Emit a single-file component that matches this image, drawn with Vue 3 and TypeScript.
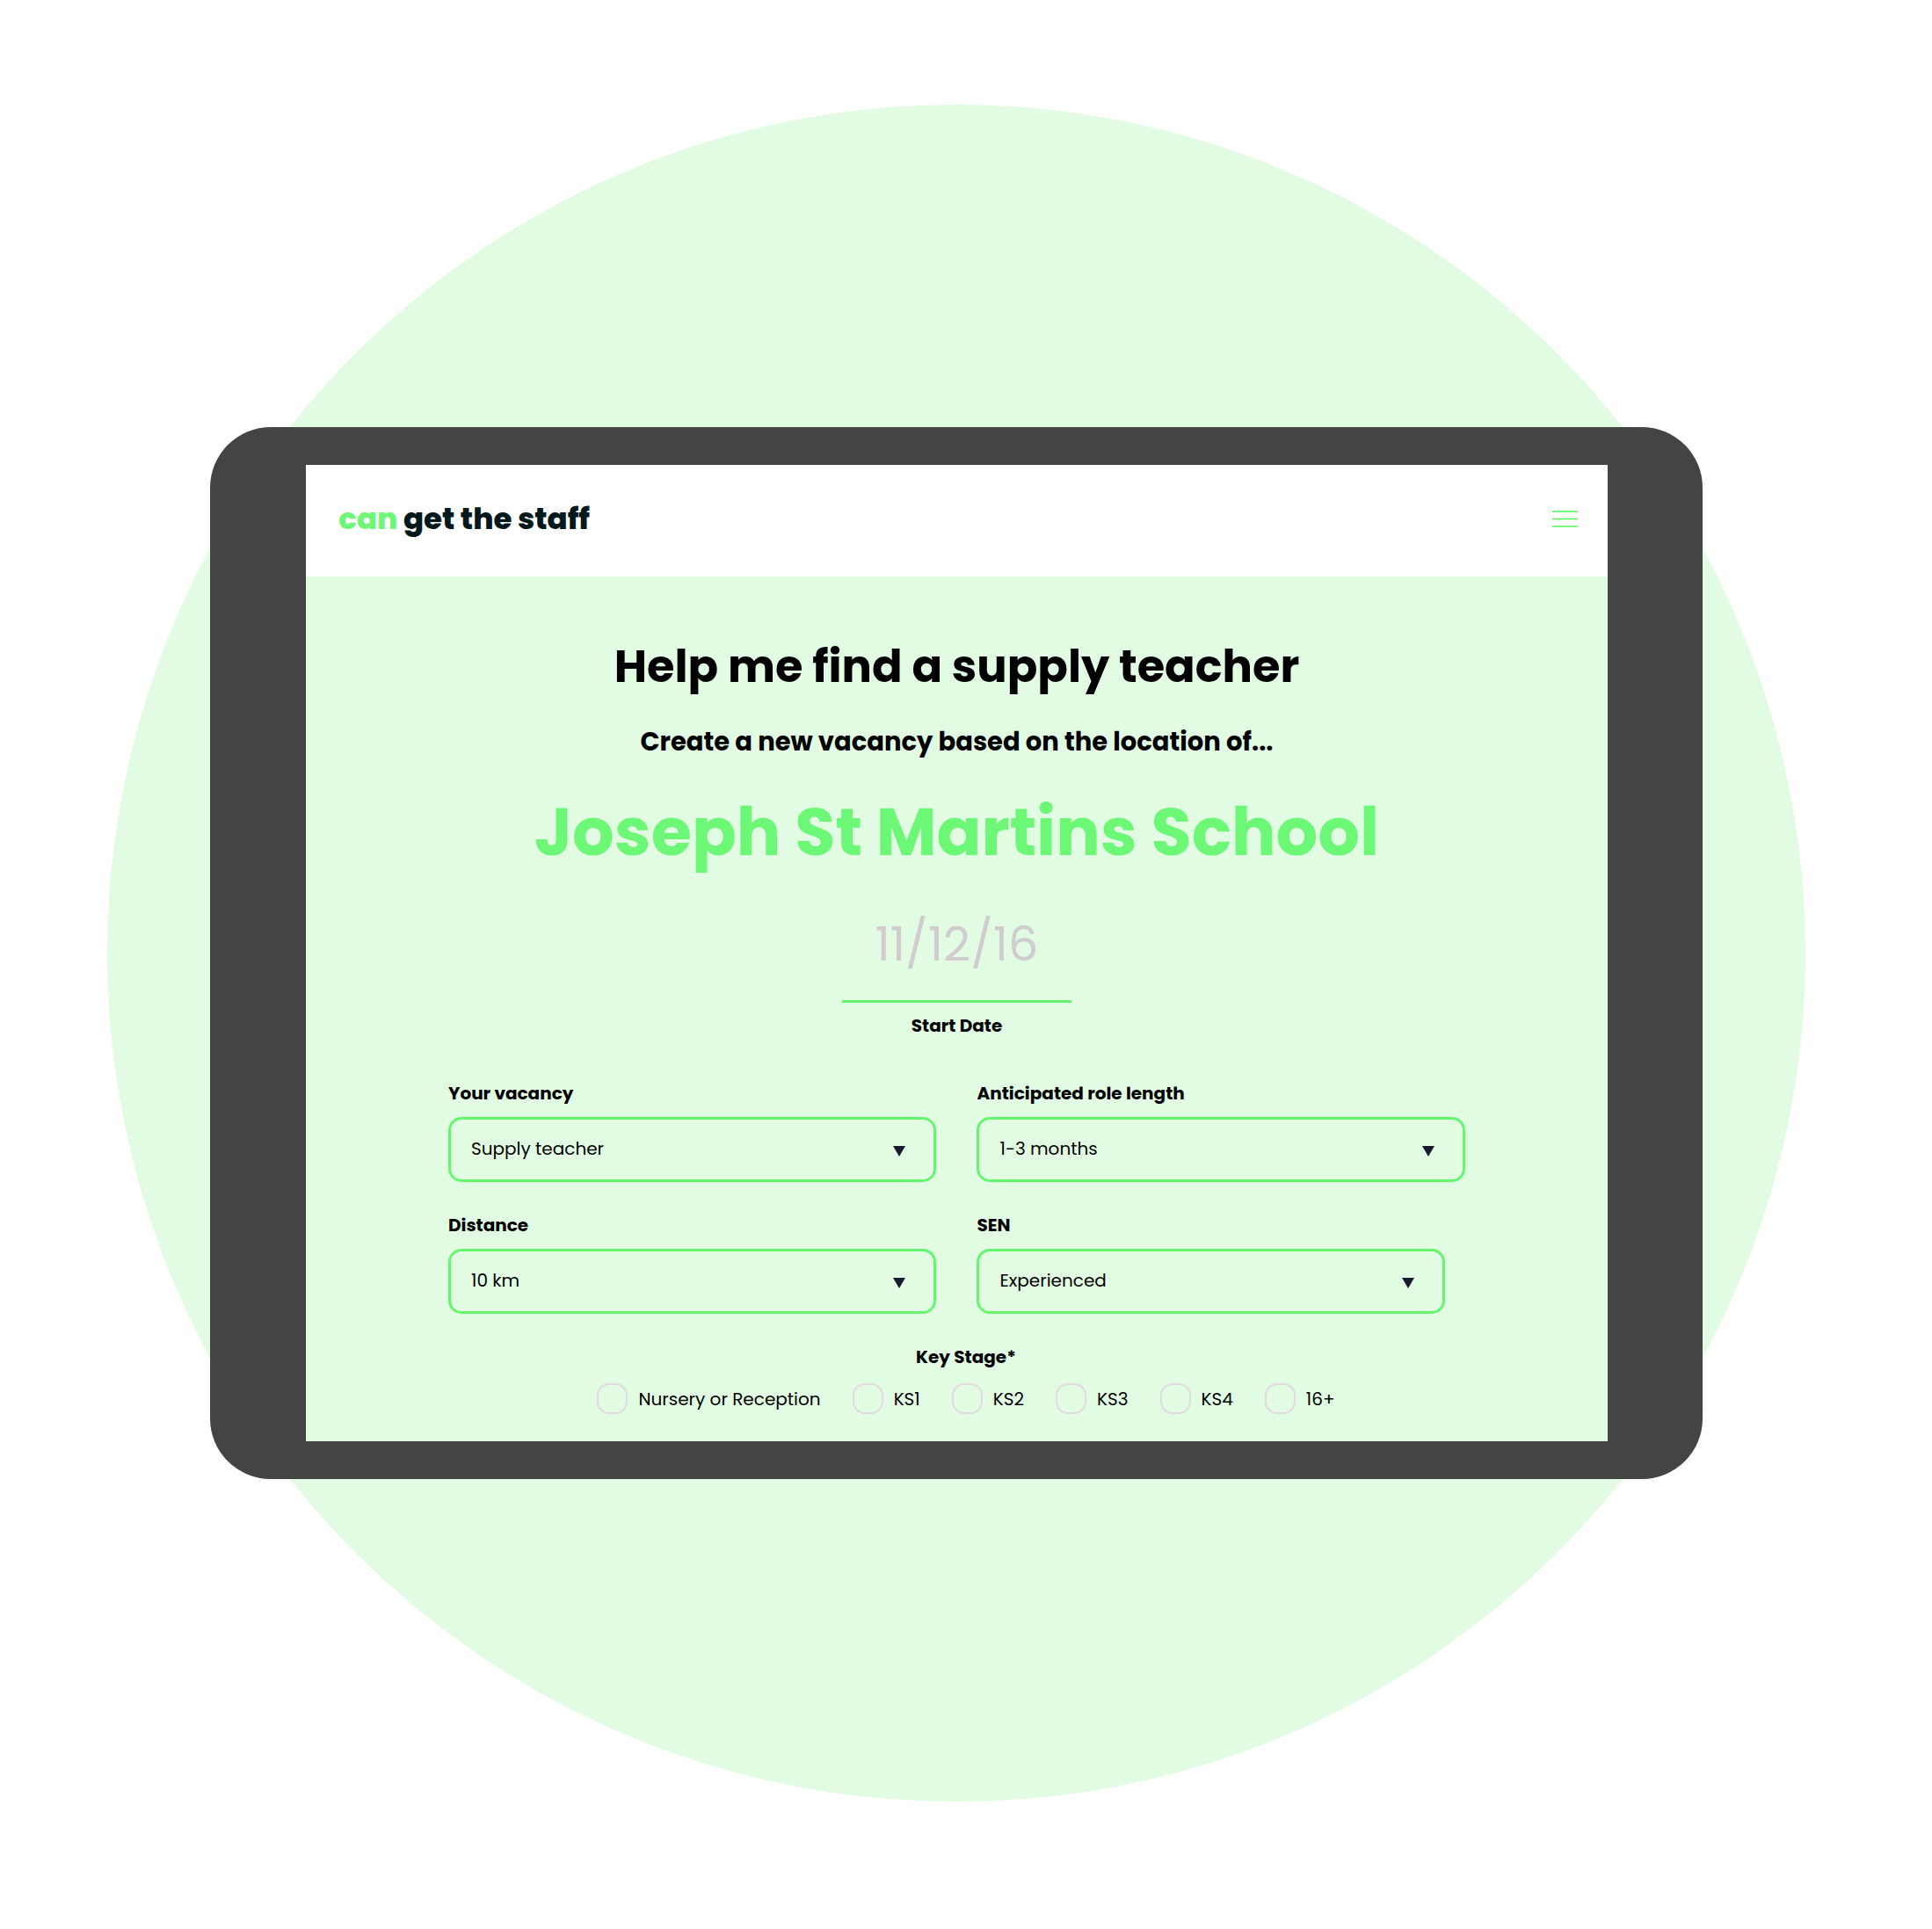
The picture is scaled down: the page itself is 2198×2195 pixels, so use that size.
<script setup lang="ts">
import { reactive, ref } from 'vue'

interface Field {
  id: string
  label: string
  options: string[]
  narrow?: boolean
}

const fields: Field[] = [
  { id: 'vacancy', label: 'Your vacancy', options: ['Supply teacher', 'Teaching assistant'] },
  { id: 'length', label: 'Anticipated role length', options: ['1-3 months', '3-6 months'] },
  { id: 'distance', label: 'Distance', options: ['10 km', '20 km'] },
  { id: 'sen', label: 'SEN', options: ['Experienced', 'Not required'], narrow: true },
]

const answers = reactive<Record<string, string>>({
  vacancy: 'Supply teacher',
  length: '1-3 months',
  distance: '10 km',
  sen: 'Experienced',
})

const stages: string[] = ['Nursery or Reception', 'KS1', 'KS2', 'KS3', 'KS4', '16+']
const chosenStages = ref<string[]>([])
const startDate = ref('')
</script>

<template>
  <div class="page">
    <div class="backdrop"></div>
    <div class="tablet">
      <div class="screen">
        <header class="bar">
          <a class="logo" href="#"><span class="logo-accent">can</span> get the staff</a>
          <button class="menu" type="button" aria-label="Open menu">
            <svg width="29" height="20" viewBox="0 0 29 20" aria-hidden="true">
              <path d="M0 2H29M0 10.5H29M0 19H29" stroke="#4cf558" stroke-width="1.6" />
            </svg>
          </button>
        </header>

        <main class="content">
          <h1 class="title">Help me find a supply teacher</h1>
          <p class="lead">Create a new vacancy based on the location of...</p>
          <h2 class="school">Joseph St Martins School</h2>

          <form class="form" @submit.prevent>
            <div class="date">
              <input id="start-date" v-model="startDate" class="date-input" type="text" placeholder="11/12/16" />
              <label class="label" for="start-date">Start Date</label>
            </div>

            <div class="fields">
              <div v-for="field in fields" :key="field.id" class="field" :class="{ narrow: field.narrow }">
                <label class="label" :for="field.id">{{ field.label }}</label>
                <div class="select-wrap">
                  <select :id="field.id" v-model="answers[field.id]" class="select">
                    <option v-for="option in field.options" :key="option">{{ option }}</option>
                  </select>
                  <svg class="arrow" width="14" height="12" viewBox="0 0 14 12" aria-hidden="true">
                    <path d="M0 0H14L7 12Z" fill="#1a1a2e" />
                  </svg>
                </div>
              </div>
            </div>

            <fieldset class="stages">
              <legend class="label legend">Key Stage*</legend>
              <div class="stage-list">
                <label v-for="stage in stages" :key="stage" class="stage">
                  <input v-model="chosenStages" class="box" type="checkbox" :value="stage" />
                  <span>{{ stage }}</span>
                </label>
              </div>
            </fieldset>
          </form>
        </main>
      </div>
    </div>
  </div>
</template>

<style>
body {
  background: #ffffff;
}
</style>

<style scoped>
.page {
  box-sizing: border-box;
  display: grid;
  place-items: center;
  padding: 119px 22px 144px 0;
  font-family: Poppins, Inter, 'Liberation Sans', sans-serif;
  color: #000000;
}

.page * {
  box-sizing: border-box;
}

.backdrop {
  grid-area: 1 / 1;
  width: 88.75%;
  aspect-ratio: 1;
  border-radius: 50%;
  background: #e1fce3;
}

.tablet {
  grid-area: 1 / 1;
  width: 78%;
  padding: 43px 108px 43px 109px;
  border-radius: 69px;
  background: #444444;
}

.screen {
  background: #e1fce3;
}

.bar {
  display: flex;
  align-items: center;
  justify-content: space-between;
  height: 127px;
  padding: 0 34px 5px 37px;
  background: #ffffff;
}

.logo {
  font-size: 34px;
  line-height: 48px;
  font-weight: 800;
  color: #04191b;
  text-decoration: none;
}

.logo-accent {
  color: #6cf776;
}

.menu {
  display: flex;
  padding: 0;
  border: 0;
  background: none;
}

.content {
  display: flex;
  flex-direction: column;
  align-items: center;
  padding: 66px 24px 31px;
}

.title,
.lead,
.school {
  margin: 0;
  font-weight: 700;
  text-align: center;
}

.title {
  font-size: 51px;
  line-height: 72px;
}

.lead {
  margin-top: 29px;
  font-size: 29px;
  line-height: 42px;
}

.school {
  margin-top: 28px;
  font-size: 75px;
  line-height: 108px;
  color: #6cf776;
}

.form {
  width: 100%;
  max-width: 1157px;
  margin-top: 34px;
}

.date {
  display: flex;
  flex-direction: column;
  align-items: center;
  gap: 11px;
}

.date-input {
  width: 261px;
  height: 106px;
  padding: 0 0 24px;
  border: 0;
  border-bottom: 3px solid #64f56e;
  background: none;
  font: inherit;
  font-size: 54px;
  line-height: 78px;
  text-align: center;
  color: #000000;
}

.date-input::placeholder {
  color: #d0ccd0;
  opacity: 1;
}

.label {
  font-size: 20px;
  line-height: 30px;
  font-weight: 700;
}

.fields {
  display: grid;
  grid-template-columns: 1fr 1fr;
  gap: 34px 46px;
  margin-top: 47px;
}

.field {
  display: flex;
  flex-direction: column;
  gap: 12px;
}

.narrow {
  padding-right: 23px;
}

.select-wrap {
  position: relative;
}

.select {
  display: block;
  width: 100%;
  height: 74px;
  padding: 0 60px 2px 23px;
  border: 3px solid #64f76e;
  border-radius: 15px;
  background: none;
  appearance: none;
  font: inherit;
  font-size: 20px;
  color: #000000;
}

.arrow {
  position: absolute;
  top: 33px;
  right: 35px;
  pointer-events: none;
}

.stages {
  margin: 34px 0 0;
  padding: 0 0 0 21px;
  border: 0;
}

.legend {
  margin: 0 auto;
  padding: 0;
}

.stage-list {
  display: flex;
  flex-wrap: wrap;
  justify-content: center;
  gap: 16px 36px;
  padding-top: 15px;
}

.stage {
  display: flex;
  align-items: center;
  gap: 12px;
  font-size: 20px;
  line-height: 30px;
}

.box {
  width: 35px;
  height: 35px;
  margin: 0;
  border: 2px solid #e2d9e2;
  border-radius: 14px;
  appearance: none;
}

.box:checked {
  background: #6cf776;
}
</style>
